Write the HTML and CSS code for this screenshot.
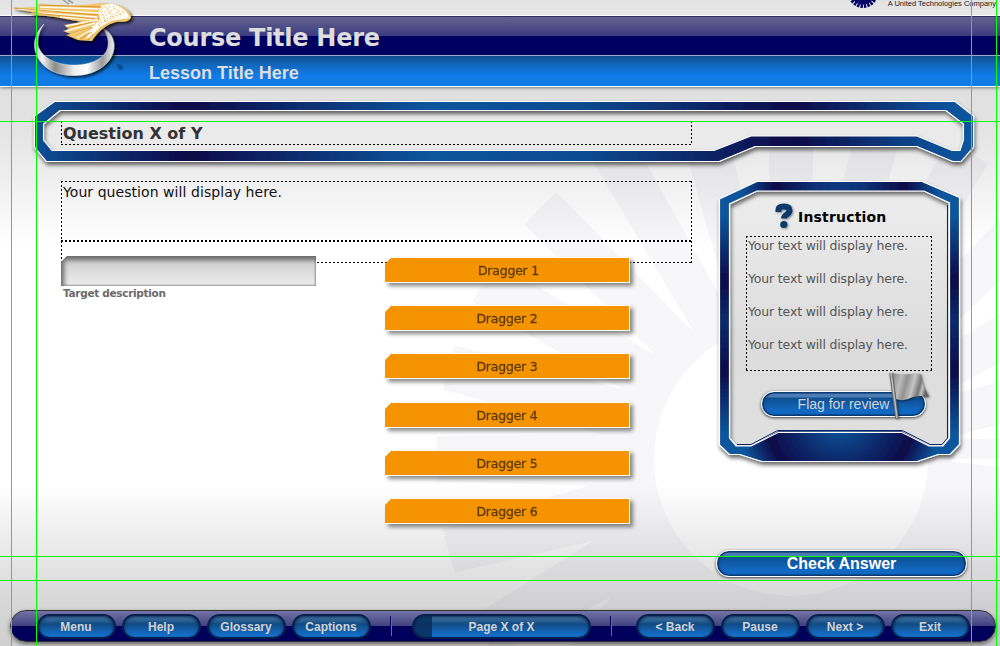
FILE: index.html
```html
<!DOCTYPE html>
<html lang="en">
<head>
<meta charset="utf-8">
<title>Course Title Here</title>
<link rel="stylesheet" href="styles.css">
</head>
<body>
<div class="stage">
  <svg class="art" id="burst" viewBox="0 0 1000 646" aria-hidden="true">
    <path id="rays" fill="#000046" fill-opacity=".032" fill-rule="evenodd"/>
  </svg>
  <div class="brand">
    <svg class="brand-mark" width="30" height="9" viewBox="0 0 30 9"><circle cx="15" cy="-7" r="13" fill="none" stroke="#000066" stroke-width="4" stroke-dasharray="2.4 1"/><circle cx="15" cy="-7" r="11.5" fill="#000066"/></svg>
    <span class="brand-text">A United Technologies Company</span>
  </div>
  <header class="course"><h1>Course Title Here</h1></header>
  <div class="lesson"><h2>Lesson Title Here</h2></div>

  <svg class="art" viewBox="0 0 1000 646" aria-hidden="true">
    <defs>
      <linearGradient id="bar" gradientUnits="userSpaceOnUse" x1="35" y1="0" x2="974" y2="0">
        <stop offset="0" stop-color="#0d5097"/><stop offset=".16" stop-color="#0c0a48"/><stop offset=".42" stop-color="#0d559c"/><stop offset=".58" stop-color="#0d4b90"/><stop offset=".81" stop-color="#0c0a48"/><stop offset=".96" stop-color="#0d4f96"/><stop offset="1" stop-color="#0d559c"/>
      </linearGradient>
      <radialGradient id="side" gradientUnits="userSpaceOnUse" cx="0" cy="0" r="1" gradientTransform="translate(840 425) scale(100 85)">
        <stop offset="0" stop-color="#0d559c"/><stop offset=".72" stop-color="#0c0a48"/><stop offset="1" stop-color="#0c0a48" stop-opacity="0"/>
      </radialGradient>
      <radialGradient id="crown" gradientUnits="userSpaceOnUse" cx="0" cy="0" r="1" gradientTransform="translate(840 186) scale(100 80)">
        <stop offset="0" stop-color="#0d3a80"/><stop offset=".25" stop-color="#0d3175"/><stop offset=".65" stop-color="#0c0a48"/><stop offset="1" stop-color="#0c0a48" stop-opacity="0"/>
      </radialGradient>
      <linearGradient id="vert" x1="0" y1="0" x2="0" y2="1">
        <stop offset="0" stop-color="#0d559c"/><stop offset=".12" stop-color="#0d559c"/><stop offset=".35" stop-color="#0c0a48"/><stop offset=".5" stop-color="#0c2a6c"/><stop offset=".68" stop-color="#0c0a48"/><stop offset=".9" stop-color="#0d559c"/><stop offset="1" stop-color="#0d559c"/>
      </linearGradient>
      <linearGradient id="face" x1="0" y1="0" x2="0" y2="1">
        <stop offset="0" stop-color="#ededed"/><stop offset=".6" stop-color="#dcdcdc"/><stop offset="1" stop-color="#e0e0e0"/>
      </linearGradient>
      <linearGradient id="silver" x1="0" y1="0" x2="1" y2="0">
        <stop offset="0" stop-color="#bbb"/><stop offset=".1" stop-color="#f4f4f4"/><stop offset=".26" stop-color="#8a8a8a"/><stop offset=".5" stop-color="#eee"/><stop offset=".66" stop-color="#fff"/><stop offset=".85" stop-color="#999"/><stop offset="1" stop-color="#eee"/>
      </linearGradient>
      <filter id="sh" x="-10%" y="-20%" width="120%" height="150%"><feDropShadow dx="1" dy="3" stdDeviation="2" flood-opacity=".6"/></filter>
      <filter id="logo-sh" x="-20%" y="-20%" width="150%" height="150%"><feDropShadow dx="2" dy="2" stdDeviation="1.5" flood-opacity=".75"/></filter>
    </defs>

    <path fill="#fff" fill-opacity=".3" d="M58 108H948L965 122V142L961 152H952L917 138H752L714 152H50L42 142V122Z"/>
    <path fill="#eaeaea" d="M58 108H948L965 122V142L961 152H952L917 138H752L714 152H50L42 142V122Z"/>
    <g filter="url(#sh)">
      <path fill="url(#bar)" fill-rule="evenodd" stroke="#fff" stroke-width="1.1" d="M54.500 101.500H955L973.500 116V147L961 161.500H953L917 146.500H755L719 161.500H46.500L34.500 147V116ZM60 110.500L43.500 124V140L52 150.500H714L751 136H917L952 150.500H960L963.500 140V124L946 110.500Z"/>
    </g>

    <path fill="url(#face)" d="M757 188H924L952 202V440L943 448H929L902 433H778L751 448H736L727 438V203Z"/>
    <g filter="url(#sh)">
      <g fill-rule="evenodd">
        <path fill="url(#vert)" d="M757 181.500H922L959.500 197.500V444.500L950 454.500H938L917 461.500H762L740 454.500H729.500L719.500 445V199ZM757 191L729.500 204V438L736 446H751L778 431.500H902L929 446H943L949.500 438V203L924 191Z"/>
        <path fill="url(#side)" d="M740 454L762 461H917L938 454L929 446L902 431.500H778L751 446Z"/>
        <path fill="url(#crown)" d="M730 195L757 182H922L949 194V203L924 191H757L730 204Z"/>
        <path fill="none" stroke="#fff" stroke-width="1.2" d="M757 181.500H922L959.500 197.500V444.500L950 454.500H938L917 461.500H762L740 454.500H729.500L719.500 445V199ZM757 191L729.500 204V438L736 446H751L778 432.500H902L929 446H943L949.500 438V203L924 191Z"/>
      </g>
    </g>
    <path fill="none" stroke="#0c2466" d="M947.500 205V438L942 444.500H930L902.500 430.500H777.500L751 444.500H737"/>

    <g filter="url(#logo-sh)">
      <path fill="url(#silver)" stroke="#eee" stroke-width=".4" d="M44 24C34 34 32 46 37 56C43 69 57 75.500 74 75.500C97 75.500 114 62 114 46C114 38 110 32 103 28C107 34 109 40 108 46C106 58 92 65 74 65C56 65 42 58 38 46C37 38 39 31 44 24Z"/>
      <circle cx="118.500" cy="65.500" r="1.800" fill="#134d86"/>
    </g>
    <g filter="url(#logo-sh)">
      <path fill="#f3c56c" d="M12 8L40 7L36 4L70 6L84 5L102 3L118 5C127 8 132 15 131 18C127 24 119 20 113 23C104 26 96 34 92 41L78 40L66 35L71 34L63 31L69 29L64 25L82 22L55 17L29 14L36 13Z"/>
      <path fill="#fffdf5" d="M101 5L112 4C124 7 130 15 129 18C121 20 115 19 109 22C99 27 93 34 90 38L86 38L93 27L100 19L99 12Z"/>
      <path fill="none" stroke="#fffaf0" stroke-width="1.300" d="M18 9L100 13M40 7L99 9M38 13L97 17M60 17L98 20M66 26L97 20M66 31L95 23M70 34L94 26M77 38L93 29"/>
      <path fill="none" stroke="#cf8d1c" stroke-width=".8" d="M14 8L98 15M39 5L102 7M34 13L95 19M67 28L93 22M69 34L92 27M80 39L92 32M88 40L93 34"/>
      <path fill="none" stroke="#e0a53c" stroke-width=".7" stroke-dasharray="2 1.500" d="M105 6L101 10M110 6L102 15M115 8L100 20M120 10L98 25M124 12L104 22M113 6L122 16M106 7L114 19M101 11L106 22M98 18L100 27"/>
    </g>
    <path d="M63 0L69 4M68 0L73 3" stroke="#999" stroke-width="1.500"/>
  </svg>

  <main class="content">
    <section class="work">
      <div class="dash title-box"><h3>Question X of Y</h3></div>
      <div class="dash question-box">Your question will display here.</div>
      <div class="dash feedback-box"></div>
      <div class="columns">
        <div class="targets">
          <div class="slot"></div>
          <div class="slot-label">Target description</div>
        </div>
        <div class="draggers">
          <div class="drag"><div class="drag-face first">Dragger 1</div></div>
          <div class="drag"><div class="drag-face">Dragger 2</div></div>
          <div class="drag"><div class="drag-face">Dragger 3</div></div>
          <div class="drag later"><div class="drag-face">Dragger 4</div></div>
          <div class="drag"><div class="drag-face">Dragger 5</div></div>
          <div class="drag"><div class="drag-face">Dragger 6</div></div>
        </div>
      </div>
    </section>
    <aside class="side">
      <div class="side-head">
        <svg class="qmark" width="20" height="28" viewBox="0 0 20 28"><path d="M4.500 10V7.500C4.500 5 7 4.500 10 4.500S15.500 5.500 15.500 8.500C15.500 13 10 12 10 16.500" fill="none" stroke="#0d3a6c" stroke-width="6"/><circle cx="9.800" cy="22.500" r="3.600" fill="#0d3a6c"/></svg>
        <span>Instruction</span>
      </div>
      <div class="dash side-box">
        <p>Your text will display here.</p><p>Your text will display here.</p><p>Your text will display here.</p><p>Your text will display here.</p>
      </div>
      <button class="pill flag">Flag for review
        <svg class="flag-icon" width="44" height="52" viewBox="0 0 44 52">
          <defs><linearGradient id="cloth" x1="0" y1="0" x2="1" y2=".2"><stop offset="0" stop-color="#888"/><stop offset=".25" stop-color="#bbb"/><stop offset=".42" stop-color="#929292"/><stop offset=".62" stop-color="#c4c4c4"/><stop offset=".8" stop-color="#777"/><stop offset=".9" stop-color="#c0c0c0"/><stop offset="1" stop-color="#666"/></linearGradient></defs>
          <path fill="url(#cloth)" d="M5 3C12 6 24 3 33 4C34 13 37 20 41 26C38 28 36 26 33 26C24 25 18 33 8 29Z"/>
          <path d="M3 3L9 48" stroke="#666" stroke-width="3.500"/><path d="M3 3L9 48" stroke="#bbb" stroke-width="1.600"/>
        </svg>
      </button>
      <button class="pill check">Check Answer</button>
    </aside>
  </main>

  <footer class="nav">
    <div class="group"><button>Menu</button><button>Help</button><button>Glossary</button><button>Captions</button></div>
    <i class="sep"></i>
    <div class="progress">Page X of X</div>
    <i class="sep"></i>
    <div class="group right"><button>&lt; Back</button><button>Pause</button><button>Next &gt;</button><button>Exit</button></div>
  </footer>

  <svg class="art" viewBox="0 0 1000 646" aria-hidden="true">
    <path d="M11.500 0V646M36.500 0V646M971.500 0V646M996.500 0V646M0 121.500H1000M0 556.500H1000M0 580.500H1000" stroke="#00ff00"/>
  </svg>
</div>
<script src="burst.js"></script>
</body>
</html>
```
FILE: styles.css
```css
* { box-sizing: border-box; }
body { margin: 0; font-family: "DejaVu Sans", Verdana, sans-serif; }
h1, h2, h3, p { margin: 0; }
button { font: inherit; border: 0; padding: 0; }

.stage {
  position: relative;
  width: 1000px;
  height: 646px;
  overflow: hidden;
  display: flex;
  flex-direction: column;
  background: linear-gradient(#e2e2e2 0, #e8e8e8 15px, #e0e0e0 90px, #e2e2e2 120px, #eee 175px, #fff 245px, #fff 485px, #eee 535px, #d8d8d9 600px, #cfcfcf 646px);
}
.art { position: absolute; left: 0; top: 0; width: 1000px; height: 646px; pointer-events: none; }

.brand { height: 15px; display: flex; justify-content: flex-end; padding-right: 4px; }
.brand-mark { margin-right: 10px; }
.brand-text { font: 7.5px/7px "Liberation Sans", Arial, sans-serif; color: #222; white-space: nowrap; }
.course {
  height: 41px;
  flex: none;
  padding: 8px 0 0 149px;
  border-top: 1px solid #fff;
  border-bottom: 1px solid #a9b3df;
  background: linear-gradient(#2d2d69 0 1px, #63638f 1px, #3b3b80 20px, #000060 20px);
}
.course h1 { color: #ddd; font-size: 24px; line-height: 29px; letter-spacing: -.27px; }
.lesson {
  height: 31px;
  flex: none;
  padding: 6px 0 0 149px;
  border-bottom: 1px solid #fff;
  background: linear-gradient(#0f4e8c, #1068bd 9px, #117be8 20px);
  box-shadow: 0 1px 3px #777;
}
.lesson h2 { color: #ddd; font: bold 18px/22px "Liberation Sans", Arial, sans-serif; }

.content { position: relative; height: 523px; flex: none; display: flex; align-items: flex-start; padding-left: 61px; }
.work { width: 631px; padding-top: 34px; flex: none; }
.dash {
  background:
    repeating-linear-gradient(90deg, #000 0 2px, transparent 2px 4px) 0 0 / 100% 1px no-repeat,
    repeating-linear-gradient(90deg, #000 0 2px, transparent 2px 4px) 0 100% / 100% 1px no-repeat,
    repeating-linear-gradient(#000 0 2px, transparent 2px 4px) 0 0 / 1px 100% no-repeat,
    repeating-linear-gradient(#000 0 2px, transparent 2px 4px) 100% 0 / 1px 100% no-repeat;
}
.title-box { height: 24px; padding: 3px 2px 2px; }
.title-box h3 { color: #333; font-size: 16px; line-height: 20px; }
.question-box { height: 60px; margin-top: 36px; padding: 2px; font-size: 14px; line-height: 18px; letter-spacing: .06px; color: #111; }
.feedback-box { height: 22px; }
.columns { display: flex; margin-top: -7px; gap: 69px; }
.slot {
  width: 255px;
  height: 30px;
  background: linear-gradient(#cacaca, #eee);
  box-shadow: inset 3px 4px 5px #666, inset -1px -1px 2px #999;
  clip-path: polygon(6px 0, 100% 0, 100% 100%, 0 100%, 0 6px);
}
.slot-label { margin: 0 0 0 2px; font: bold 10.5px/14px "DejaVu Sans", sans-serif; letter-spacing: -.3px; color: #6a6a6a; }
.draggers { display: flex; flex-direction: column; gap: 22px; padding-top: 1px; }
.drag { width: 245px; height: 26px; filter: drop-shadow(3px 3px 2px #0007); }
.drag-face {
  height: 26px;
  border: 1px solid #fff;
  border-left: 0;
  background: #f59300;
  clip-path: polygon(7px 0, 100% 0, 100% 100%, 0 100%, 0 7px);
  text-align: center;
  font-size: 12.5px;
  letter-spacing: -.22px;
  line-height: 26px;
  color: #5e3c08;
  -webkit-text-stroke: .3px #5e3c08;
}
.first { padding-left: 3px; }
.later { margin-top: 1px; }

.side { width: 250px; margin-left: 24px; padding-top: 113px; flex: none; display: flex; flex-direction: column; }
.side-head { display: flex; align-items: center; height: 34px; padding-left: 58px; gap: 4px; font-weight: bold; font-size: 14px; letter-spacing: .18px; color: #000; }
.qmark { margin-top: -3px; filter: drop-shadow(1px 1px 1px #0006); }
.side-box { width: 186px; height: 135px; margin: 2px 0 0 30px; padding: 1px 2px; font-size: 12.5px; letter-spacing: -.16px; color: #555; }
.side-box p { height: 33px; line-height: 17px; white-space: nowrap; }

.pill {
  color: #d4d4d4;
  border: 1.5px solid #fff;
  border-radius: 13px;
  background: linear-gradient(#5f92cc 0, #4b7cb4 5px, #0f4f8f 6px, #1274d8 100%);
  box-shadow: inset 0 0 0 1.5px #0a3a74, inset 0 0 4px #062a5a, 0 1px 3px #000b;
  font-family: "Liberation Sans", Arial, sans-serif;
}
.flag { position: relative; width: 165px; height: 26px; margin: 20px 0 0 45px; font-size: 14px; }
.flag-icon { position: absolute; left: 126px; top: -22px; filter: drop-shadow(1px 1px 1px #0008); }
.check { width: 251px; height: 27px; margin: 133px 0 0 0; padding-top: 1px; font-size: 16px; font-weight: bold; color: #fff; }

.nav {
  position: relative;
  flex: none;
  width: 986px;
  height: 32px;
  margin-left: 10px;
  display: flex;
  align-items: center;
  padding: 0 25px 0 26px;
  border: 1px solid #333;
  border-radius: 16px;
  background: linear-gradient(#7474a8, #40407e 15px, #00005c 15px);
  box-shadow: 0 2px 4px #0008;
}
.group { display: flex; gap: 6px; }
.right { margin-left: auto; }
.nav button, .progress {
  height: 25px;
  border: 2px solid #061f4c;
  border-radius: 13px;
  background: linear-gradient(#4f7ba6 0, #114b84 8px, #1575d4 100%);
  box-shadow: inset 0 1px 3px #032650;
  color: #d2d2d2;
  font: bold 12px/22px "Liberation Sans", Arial, sans-serif;
  text-align: center;
}
.nav button { width: 79px; padding-right: 1px; padding-top: 1px; line-height: 20px; }
.sep { width: 2px; height: 20px; margin: 0 20px 0 19px; flex: none; background: linear-gradient(90deg, #000060 50%, #6868a0 50%); }
.progress { width: 179px; background: linear-gradient(90deg, #092f5cdd 18px, transparent 18px), linear-gradient(#4f7ba6 0, #114b84 8px, #1575d4 100%); }
```
FILE: burst.js
```js
(function () {
  var cx = 791, cy = 459, R = 355, r = 137;
  function pt(deg, rad) {
    var a = deg * Math.PI / 180;
    return (cx - rad * Math.cos(a)).toFixed(1) + ' ' + (cy - rad * Math.sin(a)).toFixed(1);
  }
  var d = '', k, g, tip;
  for (k = -4; k < 12; k++) {
    g = 7.5 + k * 15;
    tip = Math.max(150, 198 - 0.73 * g);
    d += (d ? 'L' : 'M') + pt(g - 3.8, R) + 'L' + pt(g, tip) + 'L' + pt(g + 3.8, R);
    d += 'A' + R + ' ' + R + ' 0 0 1 ' + pt(g + 11.2, R);
  }
  d += 'L' + pt(180, r) + 'L' + pt(180, R) + 'A' + R + ' ' + R + ' 0 0 1 ' + pt(-60, R) + 'Z';
  d += 'M' + pt(0, r) + 'A' + r + ' ' + r + ' 0 1 1 ' + pt(180, r) + 'A' + r + ' ' + r + ' 0 1 1 ' + pt(0, r) + 'Z';
  document.getElementById('rays').setAttribute('d', d);
})();
```
